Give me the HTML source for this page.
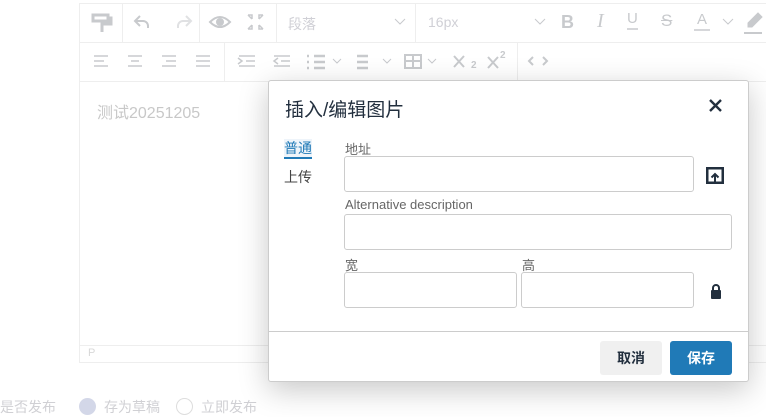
<!DOCTYPE html>
<html><head><meta charset="utf-8"><style>
*{box-sizing:border-box;margin:0;padding:0}
body{width:766px;height:409px;overflow:hidden;background:#fff;font-family:"Liberation Sans","Noto Sans CJK SC",sans-serif;position:relative}
.a{position:absolute}
.ed{left:79px;top:3px;width:700px;height:360px;border:1px solid #eee}
.hl{position:absolute;height:1px;background:#eee}
.vl{position:absolute;width:1px;background:#eee}
.ic{position:absolute;color:#c8cacd;font-size:16px}
.dlg{left:268px;top:80px;width:481px;height:302px;background:#fff;border:1px solid #ccc;border-radius:3px;box-shadow:0 8px 30px rgba(0,0,0,.22)}
.lb{position:absolute;font-size:13px;color:#666}
.in{position:absolute;border:1px solid #ccc;border-radius:3px;background:#fff}
</style></head><body>
<div class="a ed"></div>
<div class="hl" style="left:79px;top:42px;width:700px"></div>
<div class="hl" style="left:79px;top:81px;width:700px"></div>
<div class="vl" style="left:122px;top:3px;height:39px"></div>
<div class="vl" style="left:199px;top:3px;height:39px"></div>
<div class="vl" style="left:276px;top:3px;height:39px"></div>
<div class="vl" style="left:415px;top:3px;height:39px"></div>
<div class="vl" style="left:224px;top:42px;height:39px"></div>
<div class="vl" style="left:517px;top:42px;height:39px"></div>
<svg class="a" style="left:0;top:0" width="766" height="90" fill="none" stroke="#c8cacd" stroke-width="2">
<path d="M93 15h15v6h-15zM108 18h3v6h-9v8" stroke-width="3"/>
<path d="M140 16l-5 5 5 5M135 21h8a5 5 0 015 5v2"/>
<path d="M186 16l5 5-5 5M191 21h-8a5 5 0 00-5 5v2" stroke="#e0e1e3"/>
<path d="M210 22q10-10 20 0q-10 10-20 0z"/><circle cx="220" cy="22" r="3" fill="#c8cacd"/>
<path d="M248 15h4v4M263 15h-4v4M248 29h4v-4M263 29h-4v-4M252 19l-4-4M259 19l4-4M252 25l-4 4M259 25l4 4" stroke-width="1.5"/>
<path d="M395 19l5 5 5-5M535 19l5 5 5-5M723 19l5 5 5-5" stroke-width="1"/>
<path d="M94 56h14M94 61h10M94 66h14M128 56h14M131 61h8M128 66h14M162 56h14M166 61h10M162 66h14M196 56h14M196 61h14M196 66h14" stroke-width="1.5"/>
<path d="M239 56h16M246 61h9M239 66h16M238 58l4 3-4 3M274 56h16M281 61h9M274 66h16M278 58l-4 3 4 3" stroke-width="1.5"/>
<path d="M307 56h2M314 56h11M307 62h2M314 62h11M307 68h2M314 68h11M357 56h11M357 62h11M357 68h11" stroke-width="2.5"/>
<path d="M333 59l4 4 4-4M383 59l4 4 4-4M428 59l4 4 4-4" stroke-width="1"/>
<path d="M405 55h16v13h-16zM405 61h16M413 55v13"/>
<path d="M454 56l10 11M464 56l-10 11M488 57l10 11M498 57l-10 11M533 57l-4 4 4 4M543 57l4 4-4 4"/>
<path d="M748 23l10-10 4 4-10 10h-4z" fill="#c8cacd" stroke-width="1"/><path d="M744 33h18" stroke-width="2"/>
<path d="M627 29h11M694 30h16" stroke-width="1.5"/>
</svg>
<div class="ic" style="left:288px;top:14px;font-size:14px;color:#d0d0d6">段落</div>
<div class="ic" style="left:428px;top:14px;font-size:14px;color:#d0d0d6">16px</div>
<div class="ic" style="left:561px;top:12px;font-size:18px;font-weight:bold">B</div>
<div class="ic" style="left:597px;top:10px;font-size:20px;font-style:italic;font-family:'Liberation Serif'">I</div>
<div class="ic" style="left:627px;top:10px;font-size:15px">U</div>
<div class="ic" style="left:661px;top:11px;font-size:17px;text-decoration:line-through">S</div>
<div class="ic" style="left:697px;top:11px;font-size:15px">A</div>
<div class="ic" style="left:471px;top:60px;font-size:10px;font-weight:bold">2</div>
<div class="ic" style="left:500px;top:50px;font-size:10px;font-weight:bold">2</div>
<div class="a" style="left:97px;top:99px;font-size:16px;color:#c8c8c8">测试20251205</div>
<div class="hl" style="left:79px;top:345px;width:700px"></div>
<div class="a" style="left:88px;top:347px;font-size:11px;color:#d8d8d8">P</div>
<div class="a" style="left:0;top:397px;font-size:14px;color:#d0d0d4">是否发布</div>
<div class="a" style="left:79px;top:398px;width:17px;height:17px;border-radius:50%;background:#d3d7e8"></div>
<div class="a" style="left:104px;top:397px;font-size:14px;color:#d0d0d4">存为草稿</div>
<div class="a" style="left:176px;top:398px;width:17px;height:17px;border-radius:50%;border:1px solid #ddd"></div>
<div class="a" style="left:201px;top:397px;font-size:14px;color:#d0d0d4">立即发布</div>

<div class="a dlg">
<div class="a" style="left:16px;top:14px;font-size:19px;color:#222f3e">插入/编辑图片</div>
<svg class="a" style="left:440px;top:18px" width="13" height="13" stroke="#222f3e" stroke-width="2.4"><path d="M1 1l11 11M12 1L1 12"/></svg>
<div class="a" style="left:15px;top:58px;font-size:14px;color:#207ab7;border-bottom:2px solid #207ab7;line-height:18px;background:#eef4fa">普通</div>
<div class="a" style="left:15px;top:86px;font-size:14px;color:#444">上传</div>
<div class="lb" style="left:76px;top:58px">地址</div>
<div class="in" style="left:75px;top:75px;width:350px;height:36px"></div>
<svg class="a" style="left:437px;top:86px" width="18" height="17"><rect x="1.25" y="1.25" width="15.5" height="14.5" fill="none" stroke="#222f3e" stroke-width="2.5"/><path d="M9 15V7M5.5 10.5L9 7l3.5 3.5" stroke="#222f3e" stroke-width="2" fill="none"/></svg>
<div class="lb" style="left:76px;top:116px">Alternative description</div>
<div class="in" style="left:75px;top:133px;width:388px;height:36px"></div>
<div class="lb" style="left:76px;top:174px">宽</div>
<div class="lb" style="left:253px;top:174px">高</div>
<div class="in" style="left:75px;top:191px;width:173px;height:36px"></div>
<div class="in" style="left:252px;top:191px;width:173px;height:36px"></div>
<svg class="a" style="left:441px;top:202px" width="12" height="17"><path d="M3 8V5a3 3 0 016 0v3" stroke="#222f3e" stroke-width="2" fill="none"/><rect x="1" y="7" width="10" height="9" rx="1" fill="#222f3e"/></svg>
<div class="hl" style="left:0;top:250px;width:479px;background:#ccc"></div>
<div class="a" style="left:331px;top:260px;width:62px;height:34px;background:#f0f0f0;border-radius:3px;font-size:14px;font-weight:bold;color:#222f3e;text-align:center;line-height:34px">取消</div>
<div class="a" style="left:401px;top:260px;width:62px;height:34px;background:#207ab7;border-radius:3px;font-size:14px;font-weight:bold;color:#fff;text-align:center;line-height:34px">保存</div>
</div>
</body></html>
